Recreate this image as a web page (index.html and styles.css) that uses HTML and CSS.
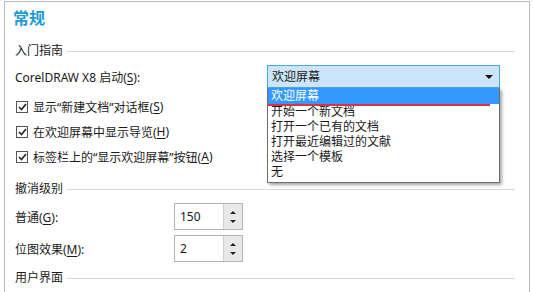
FILE: index.html
```html
<!DOCTYPE html>
<html lang="zh-CN">
<head>
    <meta charset="UTF-8">
    <title>常规</title>
    <link rel="stylesheet" href="styles.css">
</head>
<body>
    <div class="panel">
        <div class="title">常规</div>

        <div class="group-head"><span>入门指南</span></div>
        <div class="row combo-row">
            <label class="label">CorelDRAW X8 启动(<u>S</u>):</label>
            <div class="combo">
                <span>欢迎屏幕</span>
                <span class="arrow"></span>
                <ul class="list">
                    <li class="selected">欢迎屏幕</li>
                    <li>开始一个新文档</li>
                    <li>打开一个已有的文档</li>
                    <li>打开最近编辑过的文献</li>
                    <li>选择一个模板</li>
                    <li>无</li>
                </ul>
                <div class="mark"></div>
            </div>
        </div>

        <div class="check-row"><span class="box"><svg width="9" height="8" viewBox="0 0 9 8"><path d="M1 4 L3.5 6.5 L8 1" fill="none" stroke="#222" stroke-width="1.6"/></svg></span>显示“新建文档”对话框(<u>S</u>)</div>
        <div class="check-row"><span class="box"><svg width="9" height="8" viewBox="0 0 9 8"><path d="M1 4 L3.5 6.5 L8 1" fill="none" stroke="#222" stroke-width="1.6"/></svg></span>在欢迎屏幕中显示导览(<u>H</u>)</div>
        <div class="check-row"><span class="box"><svg width="9" height="8" viewBox="0 0 9 8"><path d="M1 4 L3.5 6.5 L8 1" fill="none" stroke="#222" stroke-width="1.6"/></svg></span>标签栏上的“显示欢迎屏幕”按钮(<u>A</u>)</div>

        <div class="group-head undo-head"><span>撤消级别</span></div>
        <div class="spin-row">
            <label class="spin-label">普通(<u>G</u>):</label>
            <div class="spin">
                <span class="value">150</span>
                <span class="buttons"><i class="up"></i><i class="down"></i></span>
            </div>
        </div>
        <div class="spin-row second">
            <label class="spin-label">位图效果(<u>M</u>):</label>
            <div class="spin">
                <span class="value">2</span>
                <span class="buttons"><i class="up"></i><i class="down"></i></span>
            </div>
        </div>

        <div class="group-head ui-head"><span>用户界面</span></div>
    </div>
</body>
</html>
```

FILE: styles.css
```css
body {
    margin: 0;
    background: #fff;
    font-family: "Noto Sans", "Noto Sans CJK SC", sans-serif;
    font-size: 12px;
    color: #1a1a1a;
    overflow: hidden;
}
u {
    text-decoration: underline;
    text-underline-offset: 2px;
}
.panel {
    box-sizing: border-box;
    margin: 1px 3px 0 4px;
    height: 291px;
    border: 1px solid #bcbcbc;
    border-bottom: none;
    padding: 6px 14px 0 10px;
}
.title {
    height: 20px;
    line-height: 20px;
    font-size: 16px;
    font-weight: bold;
    color: #1c9ad6;
    margin-left: -2px;
}
.group-head {
    display: flex;
    align-items: center;
    height: 16px;
    line-height: 16px;
    margin-top: 15px;
}
.group-head::after {
    content: "";
    flex: 1;
    border-top: 1px solid #d9d9d9;
    margin-left: 4px;
}
.row {
    display: flex;
    align-items: center;
}
.combo-row {
    margin-top: 6px;
    height: 23px;
}
.label {
    width: 252px;
}
.combo {
    position: relative;
    width: 227px;
    height: 21px;
    line-height: 21px;
    border: 1px solid #4aaad9;
    background: #cde5f8;
    padding-left: 4px;
}
.arrow {
    position: absolute;
    right: 6px;
    top: 9px;
    border-left: 4px solid transparent;
    border-right: 4px solid transparent;
    border-top: 4px solid #111;
}
.list {
    position: absolute;
    left: -1px;
    top: 22px;
    width: 231px;
    margin: 0;
    padding: 0 0 3px 0;
    list-style: none;
    background: #fff;
    border: 1px solid #6e6e6e;
    border-top: none;
    box-shadow: 2px 2px 3px rgba(0, 0, 0, 0.35);
    z-index: 2;
}
.list li {
    height: 15px;
    line-height: 15px;
    padding-left: 3px;
}
.list li.selected {
    height: 16px;
    line-height: 16px;
    background: #3399ff;
    color: #fff;
}
.mark {
    position: absolute;
    left: 0;
    top: 38px;
    width: 222px;
    height: 2px;
    background: #e0323c;
    z-index: 3;
}
.check-row {
    display: flex;
    align-items: center;
    height: 25px;
    padding-left: 1px;
}
.combo-row + .check-row {
    margin-top: 6px;
}
.box {
    width: 10px;
    height: 10px;
    border: 1px solid #555;
    margin-right: 5px;
    display: flex;
    align-items: center;
    justify-content: center;
}
.undo-head {
    margin-top: 12px;
}
.spin-row {
    display: flex;
    align-items: center;
    margin-top: 6px;
}
.spin-row.second {
    margin-top: 5px;
}
.spin-label {
    width: 159px;
}
.spin {
    display: flex;
    width: 67px;
    height: 25px;
    border: 1px solid #b4b4b4;
}
.value {
    flex: 1;
    line-height: 25px;
    padding-left: 5px;
}
.buttons {
    width: 18px;
    background: #e8e8e8;
    border-left: 1px solid #d0d0d0;
    display: flex;
    flex-direction: column;
    align-items: center;
    justify-content: space-between;
    padding: 7px 0 6px;
}
.up {
    border-left: 3px solid transparent;
    border-right: 3px solid transparent;
    border-bottom: 3px solid #222;
}
.down {
    border-left: 3px solid transparent;
    border-right: 3px solid transparent;
    border-top: 3px solid #222;
}
.ui-head {
    margin-top: 8px;
}
```
